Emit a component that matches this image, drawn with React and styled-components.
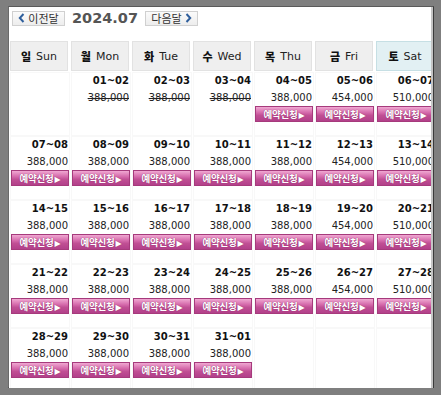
import styled, { createGlobalStyle } from "styled-components";

const GlobalStyle = createGlobalStyle`
  html, body {
    margin: 0;
    padding: 0;
    background: #7f7f7f;
    font-family: "DejaVu Sans", "Noto Sans CJK KR", sans-serif;
  }
`;

const Frame = styled.div`
  margin: 6px 0 0 8px;
  width: 424px;
  height: 380px;
  border: 1px solid #3a3a3a;
  border-top-color: #5a5a5a;
  border-left-color: #6a6a6a;
`;

const Inner = styled.div`
  width: 422px;
  height: 378px;
  background: #fff;
  border-right: 2px solid #c4c4c4;
  border-bottom: 2px solid #c4c4c4;
  overflow: hidden;
  padding-top: 3px;
  box-sizing: content-box;
`;

const Nav = styled.div`
  display: flex;
  align-items: center;
  gap: 6px;
  padding-left: 3px;
  height: 16px;
`;

const NavButton = styled.div`
  display: flex;
  align-items: center;
  gap: 3px;
  height: 15px;
  border: 1px solid #d0d0d0;
  background: linear-gradient(#fbfbfb, #ededed);
  font-family: "Noto Sans CJK KR", sans-serif;
  font-size: 11px;
  color: #333;
  width: ${(p) => p.$w}px;
  box-sizing: border-box;
  justify-content: center;
`;

const Chevron = styled.svg`
  width: 7px;
  height: 10px;
  flex: none;
`;

const ChevronIcon = ({ dir }) => (
  <Chevron viewBox="0 0 7 10">
    <path
      d={dir === "left" ? "M5.5 1 L1.8 5 L5.5 9" : "M1.5 1 L5.2 5 L1.5 9"}
      fill="none"
      stroke="#2f5f9c"
      strokeWidth="2"
    />
  </Chevron>
);

const Title = styled.div`
  font-family: "DejaVu Sans", sans-serif;
  font-weight: bold;
  font-size: 14.5px;
  color: #555;
  padding: 0 1px;
`;

const Grid = styled.div`
  display: grid;
  grid-template-columns: repeat(7, 58px);
  column-gap: 3px;
  margin-left: ${(p) => p.$left}px;
`;

const HeadGrid = styled(Grid)`
  margin-top: 15px;
`;

const HeadCell = styled.div`
  height: 28px;
  display: flex;
  align-items: center;
  justify-content: center;
  gap: 5px;
  background: ${(p) => (p.$sat ? "#e2f0f3" : "#efefef")};
  border: 1px solid ${(p) => (p.$sat ? "#c6dfe4" : "#e2e2e2")};
  font-size: 11px;
  color: #222;
`;

const Kor = styled.span`
  font-family: "Noto Sans CJK KR", sans-serif;
  font-weight: 900;
  font-size: 11px;
  color: #111;
`;

const DataGrid = styled(Grid)`
  margin-top: 2px;
  row-gap: 2px;
`;

const Cell = styled.div`
  height: 62px;
  box-shadow: 0 0 0 1px #f8f8f8;
  background: #fff;
  text-align: right;
  padding-top: 1px;
  box-sizing: border-box;
`;

const DateText = styled.div`
  font-weight: bold;
  font-size: 10px;
  line-height: 14px;
  color: #111;
  padding-right: 1px;
`;

const Price = styled.div`
  font-size: 10px;
  line-height: 14px;
  margin-top: 3px;
  color: #222;
  padding-right: 1px;
  text-decoration: ${(p) => (p.$sold ? "line-through" : "none")};
`;

const BookButton = styled.div`
  margin-top: 1px;
  height: 16px;
  box-sizing: border-box;
  border: 1px solid #a63a7c;
  background: linear-gradient(#f0a8d2, #d56aab 40%, #c04f94 60%, #b2408a);
  color: #fff;
  font-family: "Noto Sans CJK KR", sans-serif;
  font-weight: bold;
  font-size: 9.5px;
  line-height: 14px;
  text-align: center;
  text-shadow: 0 0 1px #7d1f58;
  letter-spacing: -0.2px;
`;

const Arrow = styled.span`
  font-family: "DejaVu Sans", sans-serif;
  font-size: 8px;
  margin-left: 1px;
`;

const days = [
  ["일", "Sun"],
  ["월", "Mon"],
  ["화", "Tue"],
  ["수", "Wed"],
  ["목", "Thu"],
  ["금", "Fri"],
  ["토", "Sat"],
];

const pad = (n) => String(n).padStart(2, "0");
const priceOf = (col) => (col === 5 ? "454,000" : col === 6 ? "510,000" : "388,000");

const cells = [];
for (let i = 0; i < 35; i++) {
  const day = i; // July 1 is Monday (col 1)
  if (day < 1 || day > 31) {
    cells.push(null);
    continue;
  }
  const col = i % 7;
  cells.push({
    range: `${pad(day)}~${pad(day === 31 ? 1 : day + 1)}`,
    price: priceOf(col),
    sold: day <= 3,
  });
}

export default function App() {
  return (
    <>
      <GlobalStyle />
      <Frame>
        <Inner>
          <Nav>
            <NavButton $w={53}>
              <ChevronIcon dir="left" />
              이전달
            </NavButton>
            <Title>2024.07</Title>
            <NavButton $w={53}>
              다음달
              <ChevronIcon dir="right" />
            </NavButton>
          </Nav>
          <HeadGrid $left={1}>
            {days.map(([k, e], i) => (
              <HeadCell key={e} $sat={i === 6}>
                <Kor>{k}</Kor>
                {e}
              </HeadCell>
            ))}
          </HeadGrid>
          <DataGrid $left={2}>
            {cells.map((c, i) => (
              <Cell key={i}>
                {c && (
                  <>
                    <DateText>{c.range}</DateText>
                    <Price $sold={c.sold}>{c.price}</Price>
                    {!c.sold && (
                      <BookButton>
                        예약신청<Arrow>▶</Arrow>
                      </BookButton>
                    )}
                  </>
                )}
              </Cell>
            ))}
          </DataGrid>
        </Inner>
      </Frame>
    </>
  );
}
